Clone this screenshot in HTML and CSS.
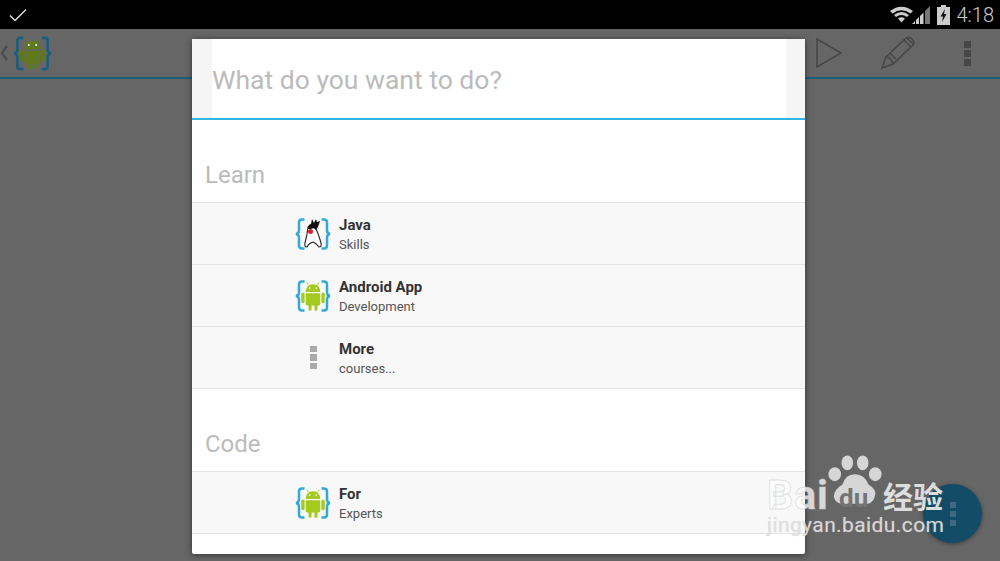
FILE: index.html
```html
<!DOCTYPE html>
<html lang="en">
<head>
  <meta charset="UTF-8" />
  <meta name="viewport" content="width=device-width, initial-scale=1.0" />
  <title>What do you want to do?</title>
  <link rel="stylesheet" href="styles.css">
</head>
<body>
  <svg class="defs" width="0" height="0">
    <symbol id="braces" viewBox="0 0 36 36">
      <path d="M9.500 3.500H7Q4 3.500 4 6.500V14.500Q4 17.500 1 18Q4 18.500 4 21.500V29.500Q4 32.500 7 32.500H9.500M26.500 3.500H29Q32 3.500 32 6.500V14.500Q32 17.500 35 18Q32 18.500 32 21.500V29.500Q32 32.500 29 32.500H26.500" fill="none" stroke="currentColor" stroke-width="2.500"/>
    </symbol>
    <symbol id="droid" viewBox="0 0 36 36">
      <g transform="translate(18 18.500) scale(1.120) translate(-18 -19.500)">
        <path d="M11.500 15.500Q11.800 8.500 18 8.500Q24.200 8.500 24.500 15.500Z"/>
        <path d="M14 9.500L12.500 7M22 9.500L23.500 7" stroke="currentColor" stroke-width=".8"/>
        <path d="M11.500 16.500H24.500V26.500Q24.500 27.500 23 27.500H22V31Q22 32.300 20.700 32.300T19.300 31V27.500H16.700V31Q16.700 32.300 15.300 32.300T14 31V27.500H13Q11.500 27.500 11.500 26.500Z"/>
        <rect x="7.500" y="16" width="3" height="9.500" rx="1.500"/>
        <rect x="25.500" y="16" width="3" height="9.500" rx="1.500"/>
        <circle cx="15" cy="12" r=".8" fill="#fff"/>
        <circle cx="21" cy="12" r=".8" fill="#fff"/>
      </g>
    </symbol>
  </svg>

  <div class="status-bar">
    <svg class="check" width="18" height="14" viewBox="0 0 18 14"><path d="M1 7.500L6 12.500L17 1.500" fill="none" stroke="#ddd" stroke-width="1.500"/></svg>
    <div class="status-right">
      <svg width="24" height="18" viewBox="0 0 24 18"><path d="M0 5Q11.500-3.500 23 5L20.500 7.500Q11.500 1 2.500 7.500ZM4 9Q11.500 3 19 9L17 11Q11.500 7 6 11ZM8 12.500Q11.500 10 15 12.500L11.500 16.500Z" fill="#ccc"/></svg>
      <svg class="signal" width="18" height="18" viewBox="0 0 18 18"><path d="M0 18L3 15V18ZM4 14L7 11V18H4ZM8 10L11.500 6.500V18H8Z" fill="#ccc"/><path d="M13 5L18 0V18H13Z" fill="#777"/></svg>
      <svg class="battery" width="13" height="20" viewBox="0 0 13 20"><path d="M4 0H9V2H13V20H0V2H4Z" fill="#ccc"/><path d="M8 4L3.500 11.500H6L5 17L9.500 9H7Z" fill="#111"/></svg>
      <span class="clock">4:18</span>
    </div>
  </div>

  <div class="toolbar">
    <div class="toolbar-left">
      <svg width="9" height="16" viewBox="0 0 9 16"><path d="M7 1L2 8L7 15" fill="none" stroke="#4c4c4c" stroke-width="2.200"/></svg>
      <svg class="logo-dim" width="39" height="39" viewBox="0 0 36 36"><use href="#braces"/><use href="#droid" class="droid-dim"/></svg>
    </div>
    <div class="toolbar-right">
      <svg width="28" height="32" viewBox="0 0 28 32"><path d="M2 2L26 16L2 30Z" fill="none" stroke="#464646" stroke-width="1.500"/></svg>
      <svg width="36" height="34" viewBox="0 0 36 34"><path d="M2 32L6 21L26 2Q29 0 32 3T33 9L13 28ZM6 21Q11 21 13 28M2 32L8 30M10 17L16 23M24 4L31 11M27 2L33 8" fill="none" stroke="#464646" stroke-width="1.500"/></svg>
      <div class="dots dots-dim"><i></i><i></i><i></i></div>
    </div>
  </div>

  <div class="fab"><div class="dots dots-fab"><i></i><i></i><i></i></div></div>

  <div class="dialog">
    <div class="dialog-title"><div class="dialog-title-inner">What do you want to do?</div></div>
    <div class="section-label">Learn</div>
    <div class="row">
      <svg class="row-icon" width="36" height="36" viewBox="0 0 36 36">
        <use href="#braces" class="brace-blue"/>
        <path d="M13 11Q15 8 19 9Q23 16 26 27Q27 31 24 31Q21 27 18 26Q14 27 12 31Q9 31 10 27Q12 20 13 11Z" fill="#fff" stroke="#222" stroke-width="1.100"/>
        <path d="M13 13Q13 9 16 8L17 3L19 7L21 3L22 6L25 5L23 11L21 14Q19 11 16 13Z" fill="#111"/>
        <circle cx="15.500" cy="15.500" r="2.500" fill="#d8232a"/>
      </svg>
      <div class="row-text"><strong>Java</strong><span>Skills</span></div>
    </div>
    <div class="row">
      <svg class="row-icon" width="36" height="36" viewBox="0 0 36 36"><use href="#braces" class="brace-blue"/><use href="#droid" class="droid-green"/></svg>
      <div class="row-text"><strong>Android App</strong><span>Development</span></div>
    </div>
    <div class="row">
      <div class="row-icon more-icon"><div class="dots dots-more"><i></i><i></i><i></i></div></div>
      <div class="row-text"><strong>More</strong><span>courses...</span></div>
    </div>
    <div class="section-label section-next">Code</div>
    <div class="row">
      <svg class="row-icon" width="36" height="36" viewBox="0 0 36 36"><use href="#braces" class="brace-blue"/><use href="#droid" class="droid-green"/></svg>
      <div class="row-text"><strong>For</strong><span>Experts</span></div>
    </div>
  </div>

  <div class="watermark">
    <svg class="paw" width="54" height="54" viewBox="0 0 56 62" preserveAspectRatio="none">
      <ellipse cx="7" cy="22" rx="6.500" ry="8" fill="#d6d6d6"/>
      <ellipse cx="20" cy="9" rx="6" ry="8.500" fill="#d6d6d6"/>
      <ellipse cx="36" cy="9" rx="6" ry="8.500" fill="#d6d6d6"/>
      <ellipse cx="49" cy="22" rx="6.500" ry="8" fill="#d6d6d6"/>
      <path d="M28 22Q38 22 42 34Q52 40 48 50Q44 58 36 56H20Q8 58 6 48Q6 40 15 34Q18 22 28 22Z" fill="#d6d6d6"/>
    </svg>
    <div class="wm-top"><span class="wm-bai">Bai</span><span class="wm-du">du</span><span class="wm-cn">经验</span></div>
    <div class="wm-url">jingyan.baidu.com</div>
  </div>
</body>
</html>
```

FILE: styles.css
```css
* {
  box-sizing: border-box;
  margin: 0;
  padding: 0;
}
body {
  width: 1000px;
  height: 561px;
  overflow: hidden;
  position: relative;
  background: #666;
  font-family: Roboto, 'Liberation Sans', sans-serif;
}
.defs {
  position: absolute;
}
.status-bar {
  height: 29px;
  background: #000;
  display: flex;
  justify-content: space-between;
  align-items: center;
  padding: 0 6px 0 9px;
}
.status-right {
  display: flex;
  align-items: center;
}
.signal {
  margin: 0 7px 0 -2px;
}
.clock {
  margin-left: 7px;
  font-size: 20px;
  font-weight: 300;
  color: #ccc;
}
.toolbar {
  height: 50px;
  background: #666;
  border-bottom: 2px solid #1c5f7c;
  display: flex;
  justify-content: space-between;
  align-items: center;
  padding-right: 29px;
}
.toolbar-left {
  display: flex;
  align-items: center;
}
.toolbar-right {
  display: flex;
  align-items: center;
  gap: 37px;
}
.logo-dim {
  color: #1c5f7c;
  margin-left: 4px;
}
.droid-dim {
  color: #5f7a1b;
  fill: #5f7a1b;
}
.dots {
  display: flex;
  flex-direction: column;
}
.dots i {
  display: block;
}
.dots-dim {
  gap: 2px;
  margin-left: 11px;
}
.dots-dim i {
  width: 7px;
  height: 7px;
  background: #464646;
}
.fab {
  position: absolute;
  left: 923px;
  top: 484px;
  width: 59px;
  height: 59px;
  border-radius: 50%;
  background: #124c67;
  box-shadow: 0 1px 4px rgba(0,0,0,0.4);
  display: flex;
  justify-content: center;
  align-items: center;
}
.dots-fab {
  gap: 3px;
}
.dots-fab i {
  width: 6px;
  height: 6px;
  background: #3d6a80;
}
.dialog {
  position: absolute;
  left: 192px;
  top: 39px;
  width: 613px;
  height: 515px;
  background: #fff;
  border-radius: 2px;
  box-shadow: 0 1px 6px rgba(0,0,0,0.5);
}
.dialog-title {
  height: 81px;
  background: #f5f5f5;
  border-bottom: 2px solid #33b5e5;
  padding: 0 19px 0 20px;
}
.dialog-title-inner {
  height: 79px;
  padding-top: 2px;
  background: #fff;
  display: flex;
  align-items: center;
  font-size: 26.500px;
  color: #bbb;
}
.section-label {
  height: 82px;
  padding: 0 0 13px 13px;
  display: flex;
  align-items: flex-end;
  font-size: 24px;
  color: #bbb;
}
.section-next {
  margin-top: 1px;
}
.row {
  height: 63px;
  background: #f8f8f8;
  border-top: 1px solid #e4e4e4;
  border-bottom: 1px solid #e4e4e4;
  margin-bottom: -1px;
  padding-left: 103px;
  display: flex;
  align-items: center;
  gap: 8px;
}
.row-icon {
  flex: none;
  width: 36px;
  height: 36px;
}
.brace-blue {
  color: #33a9d8;
}
.droid-green {
  color: #a4c91f;
  fill: #a4c91f;
}
.more-icon {
  display: flex;
  justify-content: center;
  align-items: center;
}
.dots-more {
  gap: 2px;
}
.dots-more i {
  width: 7px;
  height: 6.500px;
  background: #aaa;
}
.row-text {
  display: flex;
  flex-direction: column;
  gap: 3px;
}
.row-text strong {
  font-size: 15px;
  font-weight: 700;
  color: #333;
}
.row-text span {
  font-size: 13px;
  color: #555;
}
.watermark {
  position: absolute;
  left: 767px;
  top: 455px;
  width: 190px;
  height: 85px;
}
.paw {
  position: absolute;
  left: 61px;
  top: 0;
}
.wm-top {
  position: absolute;
  left: 0;
  top: 21px;
  height: 38px;
  display: flex;
  align-items: center;
}
.wm-bai {
  font-size: 41px;
  font-weight: 700;
  line-height: 0.850;
  letter-spacing: 1px;
  color: rgba(255,255,255,0.75);
  -webkit-text-stroke: 1px rgba(200,200,200,0.5);
}
.wm-du {
  position: absolute;
  left: 72px;
  top: 8px;
  font-size: 26px;
  font-weight: 700;
  line-height: 1.100;
  color: #747474;
}
.wm-cn {
  margin-left: 54px;
  font-family: 'Noto Sans CJK SC', sans-serif;
  font-size: 30px;
  font-weight: 700;
  line-height: 1;
  color: #ddd;
}
.wm-url {
  position: absolute;
  left: 0;
  top: 59px;
  font-size: 21px;
  line-height: 1.100;
  letter-spacing: 0.400px;
  color: rgba(225,225,225,0.9);
  text-shadow: 0 0 1px rgba(190,190,190,0.6);
}
```
